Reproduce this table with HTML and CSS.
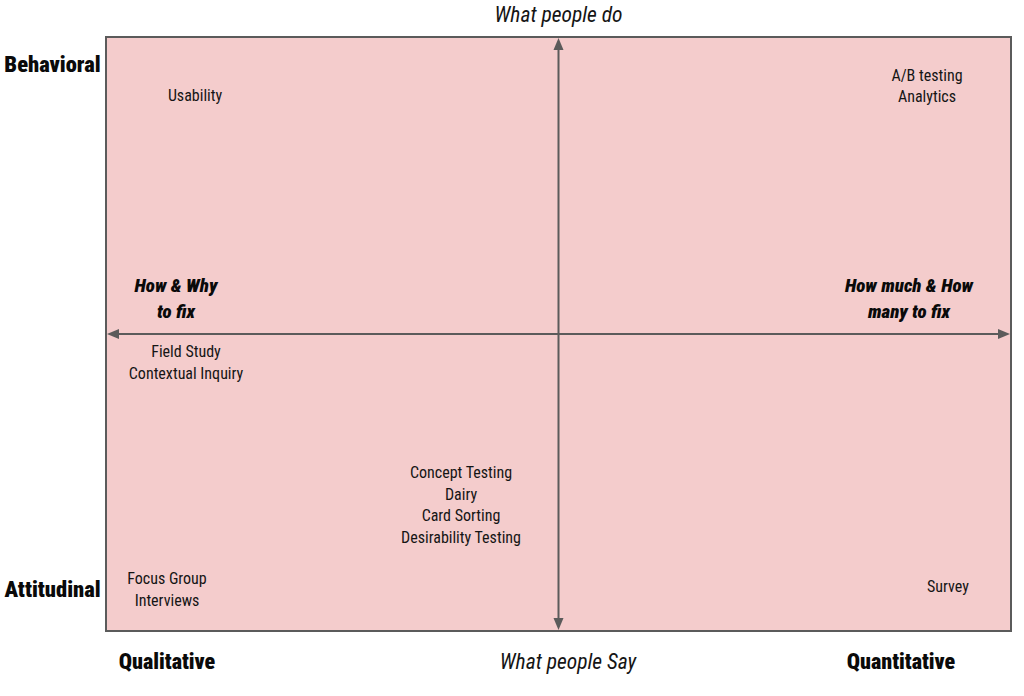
FILE: index.html
```html
<!DOCTYPE html>
<html>
<head>
<meta charset="utf-8">
<link rel="stylesheet" href="styles.css">
</head>
<body>
<div class="page">
  <div class="corner"></div>
  <div class="top-label">What people do</div>
  <div class="side">
    <div class="side-label">Behavioral</div>
    <div class="side-label">Attitudinal</div>
  </div>
  <div class="chart">
    <svg class="axes" viewBox="0 0 903 592" width="903" height="592">
      <line x1="451.5" y1="10" x2="451.5" y2="582" stroke="#5b5b5b" stroke-width="2"/>
      <line x1="10" y1="296" x2="893" y2="296" stroke="#5b5b5b" stroke-width="2"/>
      <polygon points="451.5,0 446.5,12 456.5,12" fill="#5b5b5b"/>
      <polygon points="451.5,592 446.5,580 456.5,580" fill="#5b5b5b"/>
      <polygon points="0,296 12,291 12,301" fill="#5b5b5b"/>
      <polygon points="903,296 891,291 891,301" fill="#5b5b5b"/>
    </svg>
    <div class="item" style="left:88px;top:58px">Usability</div>
    <div class="item" style="left:820px;top:47.5px">A/B testing<br>Analytics</div>
    <div class="item strong" style="left:69px;top:261px">How &amp; Why<br>to fix</div>
    <div class="item strong" style="left:802px;top:261px">How much &amp; How<br>many to fix</div>
    <div class="item" style="left:79px;top:324px">Field Study<br>Contextual Inquiry</div>
    <div class="item" style="left:354px;top:467px">Concept Testing<br>Dairy<br>Card Sorting<br>Desirability Testing</div>
    <div class="item" style="left:60px;top:551px">Focus Group<br>Interviews</div>
    <div class="item" style="left:841px;top:549px">Survey</div>
  </div>
  <div class="bottom">
    <div class="bottom-label bold">Qualitative</div>
    <div class="bottom-label ital">What people Say</div>
    <div class="bottom-label bold">Quantitative</div>
  </div>
</div>
</body>
</html>
```

FILE: styles.css
```css
html, body {
  margin: 0;
  padding: 0;
  background: #ffffff;
}
body {
  font-family: "Roboto", "DejaVu Sans", sans-serif;
  font-stretch: condensed;
  color: #111111;
  width: 1024px;
  height: 696px;
  overflow: hidden;
}
.page {
  display: grid;
  grid-template-columns: 105px 907px;
  grid-template-rows: 36px 596px 64px;
}
.top-label {
  font-style: italic;
  font-weight: 400;
  font-size: 21.5px;
  display: flex;
  align-items: center;
  justify-content: center;
  padding-bottom: 8px;
  color: #151515;
}
.side {
  display: flex;
  flex-direction: column;
  justify-content: space-between;
  align-items: center;
  padding: 15px 0 30px 0;
}
.side-label {
  font-weight: 900;
  font-size: 22.5px;
  color: #0a0a0a;
}
.chart {
  position: relative;
  box-sizing: border-box;
  width: 907px;
  height: 596px;
  background: #f4cccc;
  border: 2px solid #5b5b5b;
}
.axes {
  position: absolute;
  left: 0;
  top: 0;
}
.item {
  position: absolute;
  transform: translate(-50%, -50%);
  text-align: center;
  white-space: nowrap;
  font-size: 16px;
  font-weight: 400;
  line-height: 21.5px;
  color: #151515;
}
.item.strong {
  font-weight: 900;
  font-style: italic;
  font-size: 19px;
  line-height: 26px;
  color: #0a0a0a;
}
.bottom {
  grid-column: 1 / 3;
  display: grid;
  grid-template-columns: 334px 468px 198px;
  align-items: center;
  padding-bottom: 6px;
}
.bottom-label {
  text-align: center;
  font-size: 22px;
}
.bottom-label.bold {
  font-weight: 900;
  color: #0a0a0a;
}
.bottom-label.ital {
  font-style: italic;
  font-weight: 400;
  font-size: 21.5px;
  color: #151515;
}
```
